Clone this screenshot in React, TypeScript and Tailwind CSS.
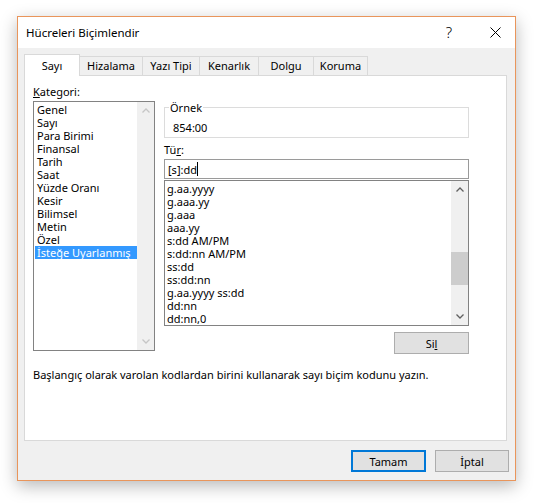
import React from 'react';

const kategoriler = [
  'Genel', 'Sayı', 'Para Birimi', 'Finansal', 'Tarih', 'Saat',
  'Yüzde Oranı', 'Kesir', 'Bilimsel', 'Metin', 'Özel', 'İsteğe Uyarlanmış',
];

const turler = [
  'g.aa.yyyy', 'g.aaa.yy', 'g.aaa', 'aaa.yy', 's:dd AM/PM', 's:dd:nn AM/PM',
  'ss:dd', 'ss:dd:nn', 'g.aa.yyyy ss:dd', 'dd:nn', 'dd:nn,0',
];

const tabs = [
  { name: 'Sayı', w: 'w-[56px]' },
  { name: 'Hizalama', w: 'w-[64px]' },
  { name: 'Yazı Tipi', w: 'w-[58px]' },
  { name: 'Kenarlık', w: 'w-[60px]' },
  { name: 'Dolgu', w: 'w-[56px]' },
  { name: 'Koruma', w: 'w-[55px]' },
];

const Chevron = ({ up, color }: { up?: boolean; color: string }) => (
  <svg width="8" height="5" viewBox="0 0 8 5" className="block">
    <path
      d={up ? 'M0.5 4.5 L4 1 L7.5 4.5' : 'M0.5 0.5 L4 4 L7.5 0.5'}
      fill="none"
      stroke={color}
      strokeWidth="1.3"
    />
  </svg>
);

export default function App() {
  return (
    <div className="min-h-screen w-full bg-white font-['Noto_Sans',sans-serif] text-[11px] leading-[15px] text-black">
      <div className="pt-[16px] pl-[17px]">
        <div className="w-[499px] h-[465px] border border-[#e9955b] bg-[#f0f0f0] shadow-[0_5px_16px_rgba(0,0,0,0.28)] flex flex-col">
          {/* title bar */}
          <div className="h-[31px] bg-white flex items-center pl-[8px]">
            <span className="text-[11.5px]">Hücreleri Biçimlendir</span>
            <div className="ml-auto flex items-center gap-[11px]">
              <div className="w-[30px] flex justify-center text-[15px] leading-[15px] font-light">?</div>
              <div className="w-[40px] flex justify-center">
                <svg width="11" height="11" viewBox="0 0 11 11">
                  <path d="M0.5 0.5 L10.5 10.5 M10.5 0.5 L0.5 10.5" stroke="#000" strokeWidth="1" />
                </svg>
              </div>
            </div>
          </div>

          {/* tabs */}
          <div className="pt-[6px] pl-[6px] flex items-end h-[28px] relative z-10 -mb-px">
            {tabs.map((t, i) =>
              i === 0 ? (
                <div
                  key={t.name}
                  className={`${t.w} h-[22px] bg-white border border-b-0 border-[#d9d9d9] flex items-center justify-center relative z-10`}
                >
                  {t.name}
                </div>
              ) : (
                <div
                  key={t.name}
                  className={`${t.w} h-[20px] -ml-px bg-[#f0f0f0] border border-[#d9d9d9] flex items-center justify-center pb-px`}
                >
                  {t.name}
                </div>
              )
            )}
          </div>

          {/* panel */}
          <div className="ml-[6px] w-[483px] h-[366px] bg-white border border-[#d9d9d9] pt-[8px] pl-[8px] flex flex-col">
            <div className="flex items-start">
              {/* left column */}
              <div className="w-[122px] flex flex-col">
                <div className="h-[15px]">
                  <span className="underline">K</span>ategori:
                </div>
                <div className="mt-[2px] h-[250px] border border-[#828282] flex">
                  <div className="flex-1 pt-[1px] pl-[1px] overflow-hidden">
                    {kategoriler.map((k, i) => (
                      <div
                        key={k}
                        className={`h-[13px] leading-[13px] pl-[2px] whitespace-nowrap ${
                          i === kategoriler.length - 1 ? 'bg-[#3399ff] text-white' : ''
                        }`}
                      >
                        {k}
                      </div>
                    ))}
                  </div>
                  <div className="w-[17px] bg-[#f0f0f0] flex flex-col justify-between">
                    <div className="h-[17px] flex items-center justify-center">
                      <Chevron up color="#c6c6c6" />
                    </div>
                    <div className="h-[17px] flex items-center justify-center">
                      <Chevron color="#c6c6c6" />
                    </div>
                  </div>
                </div>
              </div>

              {/* right column */}
              <div className="ml-[9px] w-[305px] mt-[16px] flex flex-col">
                <fieldset className="border border-[#dcdcdc] pl-[8px] pt-[5px] pb-[2px]">
                  <legend className="-ml-[4px] px-[1px]">Örnek</legend>
                  <div className="h-[15px]">854:00</div>
                </fieldset>

                <div className="mt-[4px] h-[15px]">
                  Tü<span className="underline">r</span>:
                </div>

                <div className="mt-[2px] h-[20px] border border-[#9a9a9a] flex items-center pl-[3px]">
                  <span>[s]:dd</span>
                  <span className="w-px h-[14px] bg-black" />
                </div>

                <div className="mt-[1px] h-[146px] border border-[#828282] flex">
                  <div className="flex-1 pt-[1px] pl-[2px] overflow-hidden">
                    {turler.map((t) => (
                      <div key={t} className="h-[13px] leading-[13px] whitespace-nowrap">
                        {t}
                      </div>
                    ))}
                  </div>
                  <div className="w-[17px] bg-[#f0f0f0] flex flex-col">
                    <div className="h-[17px] flex items-center justify-center">
                      <Chevron up color="#606060" />
                    </div>
                    <div className="h-[54px]" />
                    <div className="h-[33px] bg-[#cdcdcd]" />
                    <div className="flex-1" />
                    <div className="h-[17px] flex items-center justify-center">
                      <Chevron color="#606060" />
                    </div>
                  </div>
                </div>

                <div className="mt-[6px] self-end w-[75px] h-[22px] bg-[#e1e1e1] border border-[#adadad] flex items-center justify-center">
                  <span>
                    Si<span className="underline">l</span>
                  </span>
                </div>
              </div>
            </div>

            <div className="mt-[13px]">
              Başlangıç olarak varolan kodlardan birini kullanarak sayı biçim kodunu yazın.
            </div>
          </div>

          {/* buttons */}
          <div className="mt-[9px] pr-[6px] flex justify-end gap-[9px]">
            <div className="w-[75px] h-[22px] bg-[#e1e1e1] border-2 border-[#0078d7] flex items-center justify-center">
              Tamam
            </div>
            <div className="w-[74px] h-[22px] bg-[#e1e1e1] border border-[#adadad] flex items-center justify-center">
              İptal
            </div>
          </div>
        </div>
      </div>
    </div>
  );
}
